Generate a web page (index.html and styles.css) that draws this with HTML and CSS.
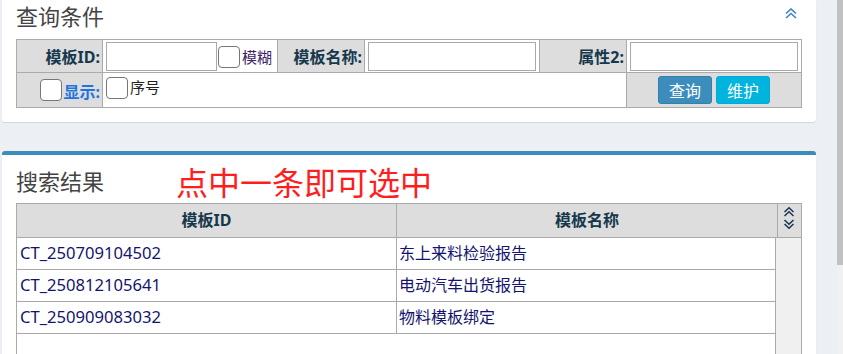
FILE: index.html
```html
<!DOCTYPE html>
<html lang="zh-CN">
<head>
<meta charset="utf-8">
<title>查询</title>
<link rel="stylesheet" href="styles.css">
</head>
<body>
<div class="page">
  <main class="content">
    <section class="box box-query">
      <div class="box-header">
        <h3 class="box-title">查询条件</h3>
        <svg class="collapse-icon" width="12" height="11" viewBox="0 0 12 11"><path d="M1 5.5 L6 1 L11 5.5 M1 10 L6 5.5 L11 10" fill="none" stroke="#3f82c4" stroke-width="1.6"/></svg>
      </div>
      <table class="query-table">
        <colgroup>
          <col class="c-label"><col class="c-field"><col class="c-label2"><col class="c-field"><col class="c-label2"><col class="c-field">
        </colgroup>
        <tr class="row-1">
          <th>模板ID:</th>
          <td><input class="text-input short" type="text"><input type="checkbox" class="cb cb-fuzzy"><span class="fuzzy">模糊</span></td>
          <th>模板名称:</th>
          <td><input class="text-input" type="text"></td>
          <th>属性2:</th>
          <td><input class="text-input" type="text"></td>
        </tr>
        <tr class="row-2">
          <th class="show-cell"><input type="checkbox" class="cb"><span class="show-label">显示:</span></th>
          <td colspan="4" class="opts-cell"><input type="checkbox" class="cb cb-seq"><span class="seq">序号</span></td>
          <td class="btn-cell"><button class="btn btn-primary">查询</button><button class="btn btn-info">维护</button></td>
        </tr>
      </table>
    </section>

    <section class="box box-result">
      <div class="result-header">
        <h3 class="box-title result-title">搜索结果</h3>
        <span class="hint">点中一条即可选中</span>
      </div>
      <div class="grid">
        <div class="grid-head">
          <div class="gh gh-id">模板ID</div>
          <div class="gh gh-name">模板名称</div>
          <div class="gh gh-tool">
            <svg width="12" height="24" viewBox="0 0 12 24"><path d="M1.5 6 L6 1.8 L10.5 6 M1.5 10 L6 5.8 L10.5 10 M1.5 14 L6 18.2 L10.5 14 M1.5 18 L6 22.2 L10.5 18" fill="none" stroke="#1c3550" stroke-width="1.5"/></svg>
          </div>
        </div>
        <div class="grid-body">
          <div class="rows">
            <div class="row"><div class="cell cell-id">CT_250709104502</div><div class="cell cell-name">东上来料检验报告</div></div>
            <div class="row"><div class="cell cell-id">CT_250812105641</div><div class="cell cell-name">电动汽车出货报告</div></div>
            <div class="row"><div class="cell cell-id">CT_250909083032</div><div class="cell cell-name">物料模板绑定</div></div>
          </div>
          <div class="track"></div>
        </div>
      </div>
    </section>
  </main>
  <div class="page-scrollbar"><div class="thumb"></div></div>
</div>
</body>
</html>
```
FILE: styles.css
```css
* { box-sizing: border-box; }
html, body { margin: 0; }
body {
  background: #ecf0f5;
  font-family: "Noto Sans", "Noto Sans CJK SC", sans-serif;
  height: 354px;
  overflow: hidden;
}
.page { display: flex; height: 354px; }
.content {
  margin-left: 2px;
  width: 814px;
  display: flex;
  flex-direction: column;
  gap: 29px;
}
.page-scrollbar {
  margin-left: auto;
  width: 6px;
  background: #f1f1f1;
  display: flex;
  flex-direction: column;
}
.page-scrollbar .thumb { height: 265px; background: #c1c1c1; }

.box {
  background: #fff;
  border-radius: 3px;
  box-shadow: 0 1px 1px rgba(0,0,0,0.1);
  padding: 0 14px;
}
.box-query {
  padding-top: 0;
  padding-bottom: 14px;
  border-top-left-radius: 0;
  border-top-right-radius: 0;
}
.box-header {
  display: flex;
  justify-content: space-between;
  align-items: flex-start;
  height: 31px;
  margin-bottom: 8px;
}
.box-title {
  margin: 0;
  font-family: "Noto Sans CJK SC", sans-serif;
  font-size: 22px;
  font-weight: normal;
  line-height: 30px;
  color: #444;
}
.collapse-icon { margin-top: 8px; margin-right: 5px; }

.query-table {
  border-collapse: collapse;
  table-layout: fixed;
  width: 786px;
}
.c-label { width: 86px; }
.c-field { width: 175px; }
.c-label2 { width: 87px; }
.query-table th, .query-table td {
  border: 1px solid #aaa;
  padding: 0;
  font-size: 16px;
  white-space: nowrap;
}
.query-table th {
  background: #ddd;
  text-align: right;
  padding-right: 2px;
  font-weight: bold;
  color: #16384c;
}
.row-1 th, .row-1 td { height: 33px; }
.row-1 td { padding-top: 1px; }
.row-2 th, .row-2 td { height: 35px; }

.text-input {
  width: 168px;
  height: 29px;
  border: 1px solid #a9a9a9;
  margin: 0 0 0 3px;
  padding: 0 3px;
  vertical-align: middle;
  background: #fff;
}
.text-input.short { width: 111px; }

.cb {
  -webkit-appearance: none;
  appearance: none;
  width: 22px;
  height: 22px;
  margin: 0;
  border: 1px solid #767676;
  border-radius: 4px;
  background: #fff;
  vertical-align: middle;
}
.cb-fuzzy { margin-left: 1px; margin-right: 2px; }
.fuzzy { color: #3d2466; font-size: 15px; vertical-align: middle; }
.show-cell .cb { margin-right: 2px; }
.show-label { color: #1f74e0; vertical-align: middle; }

.opts-cell { vertical-align: top; padding-left: 3px !important; padding-top: 4px !important; }
.cb-seq { vertical-align: top; margin-right: 2px; }
.seq { color: #222; font-size: 15px; line-height: 20px; vertical-align: top; }

.btn-cell { background: #ddd; text-align: center; }
.btn {
  width: 54px;
  height: 28px;
  border-radius: 3px;
  color: #fff;
  font-family: "Noto Sans CJK SC", sans-serif;
  font-size: 16px;
  padding: 0;
  margin: 0 2px;
  vertical-align: middle;
  cursor: pointer;
}
.btn-primary { background: #3c8dbc; border: 1px solid #367fa9; }
.btn-info { background: #00b4de; border: 1px solid #00acd6; }

.box-result {
  border-top: 4px solid #3c8dbc;
  flex: 1;
  padding-bottom: 20px;
}
.result-header {
  display: flex;
  align-items: flex-start;
  height: 48px;
}
.result-title { margin-top: 10px; }
.hint {
  margin-left: 72px;
  margin-top: 6px;
  font-family: "Noto Sans CJK SC", sans-serif;
  font-size: 32px;
  line-height: 40px;
  color: #ff1e1e;
}

.grid {
  width: 786px;
  border: 1px solid #aaa;
  border-bottom: none;
}
.grid-head {
  display: flex;
  background: #ddd;
  border-bottom: 1px solid #aaa;
  height: 34px;
}
.gh {
  font-size: 16px;
  font-weight: bold;
  color: #16384c;
  text-align: center;
  line-height: 33px;
}
.gh-id { width: 380px; border-right: 1px solid #aaa; }
.gh-name { width: 381px; border-right: 1px solid #aaa; }
.gh-tool { width: 23px; display: flex; justify-content: center; padding-top: 2px; padding-right: 1px; }

.grid-body { display: flex; height: 200px; }
.rows { width: 759px; border-right: 1px solid #aaa; }
.track { flex: 1; background: #f0f0f0; }
.row { display: flex; height: 32px; border-bottom: 1px solid #aaa; }
.cell {
  font-size: 16px;
  line-height: 30px;
  color: #14146e;
  padding: 0 3px;
  white-space: nowrap;
}
.cell-id { width: 380px; border-right: 1px solid #aaa; font-size: 16.6px; }
.cell-name { flex: 1; padding-left: 2px; }
```
